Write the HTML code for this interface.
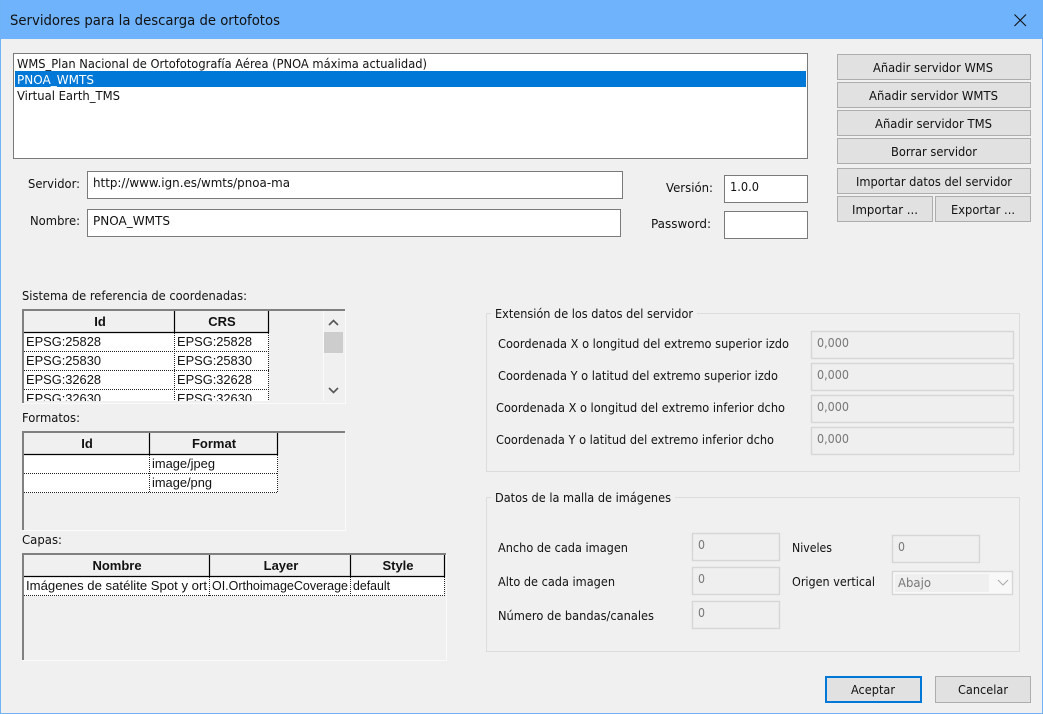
<!DOCTYPE html>
<html lang="es">
<head>
<meta charset="utf-8">
<title>Servidores para la descarga de ortofotos</title>
<style>
html,body{margin:0;padding:0;width:1043px;height:714px;overflow:hidden;background:#f0f0f0}
svg{position:absolute;left:0;top:0;display:block}
text{font-family:"DejaVu Sans",sans-serif;font-size:12px;fill:#111;white-space:pre}
.a text{font-family:"Liberation Sans",Arial,sans-serif;font-size:13px;fill:#111}
.h text{font-family:"Liberation Sans",Arial,sans-serif;font-size:13px;font-weight:bold;fill:#111;text-anchor:middle}
.d text{fill:#777}
.i{fill:#fff;stroke:#7a7a7a;stroke-width:1}
.b{fill:#e1e1e1;stroke:#adadad;stroke-width:1}
.x{fill:#efefef;stroke:#d6d6d6;stroke-width:1.4}
.g{fill:none;stroke:#dcdcdc;stroke-width:1}
.l{stroke:#000;stroke-width:1.2;fill:none}
.o{stroke:#222;stroke-width:1;stroke-dasharray:1 1;fill:none}
</style>
</head>
<body>
<svg width="1043" height="714" viewBox="0 0 1043 714" xmlns="http://www.w3.org/2000/svg">
<defs>
<clipPath id="c1"><rect x="24" y="311" width="299" height="90"/></clipPath>
</defs>
<rect width="1043" height="714" fill="#f0f0f0"/>
<!-- Window frame -->
<rect x="0" y="0" width="1043" height="39" fill="#6fb3fc"/>
<rect x="0" y="0" width="1" height="714" fill="#6fb3f5"/>
<rect x="1042" y="0" width="1" height="714" fill="#6fb3f5"/>
<rect x="0" y="713" width="1043" height="1" fill="#6fb3f5"/>
<text x="10" y="25" style="font-size:14.5px" textLength="270" lengthAdjust="spacingAndGlyphs">Servidores para la descarga de ortofotos</text>
<path d="M1014.5 14.5L1026 26M1026 14.5L1014.5 26" stroke="#111" stroke-width="1.1" fill="none"/>

<!-- Server list -->
<rect class="i" x="13.5" y="53.5" width="794" height="105"/>
<rect x="15" y="71" width="791" height="16" fill="#0078d7"/>
<text x="17" y="68" textLength="410" lengthAdjust="spacingAndGlyphs">WMS_Plan Nacional de Ortofotografía Aérea (PNOA máxima actualidad)</text>
<text x="17" y="84" textLength="77" lengthAdjust="spacingAndGlyphs" style="fill:#fff">PNOA_WMTS</text>
<text x="17" y="100" textLength="103" lengthAdjust="spacingAndGlyphs">Virtual Earth_TMS</text>

<!-- Right buttons -->
<rect class="b" x="837.5" y="54.5" width="193" height="25"/>
<rect class="b" x="837.5" y="82.5" width="193" height="25"/>
<rect class="b" x="837.5" y="110.5" width="193" height="25"/>
<rect class="b" x="837.5" y="138.5" width="193" height="25"/>
<rect class="b" x="837.5" y="168.5" width="193" height="25"/>
<rect class="b" x="837.5" y="196.5" width="95" height="25"/>
<rect class="b" x="935.5" y="196.5" width="95" height="25"/>
<text x="873" y="72" textLength="120" lengthAdjust="spacingAndGlyphs">Añadir servidor WMS</text>
<text x="869" y="100" textLength="129" lengthAdjust="spacingAndGlyphs">Añadir servidor WMTS</text>
<text x="875" y="128" textLength="117" lengthAdjust="spacingAndGlyphs">Añadir servidor TMS</text>
<text x="891" y="156" textLength="86" lengthAdjust="spacingAndGlyphs">Borrar servidor</text>
<text x="856" y="186" textLength="156" lengthAdjust="spacingAndGlyphs">Importar datos del servidor</text>
<text x="852" y="214" textLength="66" lengthAdjust="spacingAndGlyphs">Importar ...</text>
<text x="951" y="214" textLength="64" lengthAdjust="spacingAndGlyphs">Exportar ...</text>

<!-- Server fields -->
<text x="28" y="188" textLength="52" lengthAdjust="spacingAndGlyphs">Servidor:</text>
<rect class="i" x="87.5" y="171.5" width="535" height="27"/>
<text x="93" y="187" textLength="197" lengthAdjust="spacingAndGlyphs">http://www.ign.es/wmts/pnoa-ma</text>
<text x="30" y="225" textLength="50" lengthAdjust="spacingAndGlyphs">Nombre:</text>
<rect class="i" x="87.5" y="209.5" width="533" height="27"/>
<text x="93" y="225" textLength="77" lengthAdjust="spacingAndGlyphs">PNOA_WMTS</text>
<text x="666" y="192" textLength="47" lengthAdjust="spacingAndGlyphs">Versión:</text>
<rect class="i" x="724.5" y="175.5" width="83" height="27"/>
<text x="730" y="191" textLength="29" lengthAdjust="spacingAndGlyphs">1.0.0</text>
<text x="651" y="228" textLength="60" lengthAdjust="spacingAndGlyphs">Password:</text>
<rect class="i" x="724.5" y="211.5" width="83" height="27"/>

<!-- CRS table -->
<text x="22" y="300" textLength="225" lengthAdjust="spacingAndGlyphs">Sistema de referencia de coordenadas:</text>
<path d="M23 403V310H345" stroke="#808080" stroke-width="2" fill="none"/>
<path d="M345.5 310V403.5H22" stroke="#fafafa" stroke-width="1" fill="none"/>
<g clip-path="url(#c1)">
<rect x="24" y="333" width="245" height="70" fill="#fff"/>
<g class="o">
<path d="M24 351.5H269M24 370.5H269M24 389.5H269M174.5 333V403M268.5 333V403"/>
</g>
<g class="a">
<text x="26" y="346" textLength="75" lengthAdjust="spacingAndGlyphs">EPSG:25828</text>
<text x="177" y="346" textLength="75" lengthAdjust="spacingAndGlyphs">EPSG:25828</text>
<text x="26" y="365" textLength="75" lengthAdjust="spacingAndGlyphs">EPSG:25830</text>
<text x="177" y="365" textLength="75" lengthAdjust="spacingAndGlyphs">EPSG:25830</text>
<text x="26" y="384" textLength="75" lengthAdjust="spacingAndGlyphs">EPSG:32628</text>
<text x="177" y="384" textLength="75" lengthAdjust="spacingAndGlyphs">EPSG:32628</text>
<text x="26" y="403" textLength="75" lengthAdjust="spacingAndGlyphs">EPSG:32630</text>
<text x="177" y="403" textLength="75" lengthAdjust="spacingAndGlyphs">EPSG:32630</text>
</g>
</g>
<path class="l" d="M24 332.5H269M174.5 311V333M268.5 311V333"/>
<g class="h">
<text x="100" y="326">Id</text>
<text x="222" y="326">CRS</text>
</g>
<rect x="323" y="311" width="1" height="90" fill="#fbfbfb"/>
<rect x="324" y="332" width="19" height="21" fill="#cdcdcd"/>
<path d="M329 325L333.5 320.500L338 325" stroke="#555" stroke-width="1.6" fill="none"/>
<path d="M329 388L333.5 392.500L338 388" stroke="#555" stroke-width="1.6" fill="none"/>

<!-- Formats table -->
<text x="22" y="422" textLength="58" lengthAdjust="spacingAndGlyphs">Formatos:</text>
<path d="M23 530V432H345" stroke="#808080" stroke-width="2" fill="none"/>
<path d="M345.5 432V530.500H22" stroke="#fafafa" stroke-width="1" fill="none"/>
<rect x="24" y="455" width="254" height="38" fill="#fff"/>
<g class="o">
<path d="M24 473.5H278M24 492.5H278M149.500 455V493M277.500 455V493"/>
</g>
<path class="l" d="M24 454.500H278M149.500 433V455M277.500 433V455"/>
<g class="h">
<text x="87" y="448">Id</text>
<text x="214" y="448">Format</text>
</g>
<g class="a">
<text x="152" y="468" textLength="63" lengthAdjust="spacingAndGlyphs">image/jpeg</text>
<text x="152" y="487" textLength="60" lengthAdjust="spacingAndGlyphs">image/png</text>
</g>

<!-- Layers table -->
<text x="22" y="544" textLength="40" lengthAdjust="spacingAndGlyphs">Capas:</text>
<path d="M23 660V554H446" stroke="#808080" stroke-width="2" fill="none"/>
<path d="M446.500 554V660.500H22" stroke="#fafafa" stroke-width="1" fill="none"/>
<rect x="24" y="577" width="421" height="19" fill="#fff"/>
<g class="o">
<path d="M24 595.500H445M209.500 577V596M350.500 577V596M444.500 577V596"/>
</g>
<path class="l" d="M24 576.500H445M209.500 555V577M350.500 555V577M444.500 555V577"/>
<g class="h">
<text x="117" y="570">Nombre</text>
<text x="281" y="570">Layer</text>
<text x="398" y="570">Style</text>
</g>
<g class="a">
<text x="26" y="590" textLength="181" lengthAdjust="spacingAndGlyphs">Imágenes de satélite Spot y ort</text>
<text x="212" y="590" textLength="136" lengthAdjust="spacingAndGlyphs">OI.OrthoimageCoverage</text>
<text x="353" y="590" textLength="37" lengthAdjust="spacingAndGlyphs">default</text>
</g>

<!-- Extent group -->
<rect class="g" x="486.500" y="313.500" width="533" height="158"/>
<rect x="491" y="310" width="206" height="8" fill="#f0f0f0"/>
<text x="495" y="318" textLength="198" lengthAdjust="spacingAndGlyphs">Extensión de los datos del servidor</text>
<text x="498" y="348" textLength="291" lengthAdjust="spacingAndGlyphs">Coordenada X o longitud del extremo superior izdo</text>
<text x="498" y="380" textLength="280" lengthAdjust="spacingAndGlyphs">Coordenada Y o latitud del extremo superior izdo</text>
<text x="496" y="412" textLength="289" lengthAdjust="spacingAndGlyphs">Coordenada X o longitud del extremo inferior dcho</text>
<text x="496" y="444" textLength="278" lengthAdjust="spacingAndGlyphs">Coordenada Y o latitud del extremo inferior dcho</text>
<rect class="x" x="811.500" y="331.500" width="202" height="27"/>
<rect class="x" x="811.500" y="363.500" width="202" height="27"/>
<rect class="x" x="811.500" y="395.500" width="202" height="27"/>
<rect class="x" x="811.500" y="427.500" width="202" height="27"/>
<g class="d">
<text x="817" y="347" textLength="32" lengthAdjust="spacingAndGlyphs">0,000</text>
<text x="817" y="379" textLength="32" lengthAdjust="spacingAndGlyphs">0,000</text>
<text x="817" y="411" textLength="32" lengthAdjust="spacingAndGlyphs">0,000</text>
<text x="817" y="443" textLength="32" lengthAdjust="spacingAndGlyphs">0,000</text>
</g>

<!-- Grid group -->
<rect class="g" x="486.500" y="497.500" width="533" height="154"/>
<rect x="491" y="494" width="184" height="8" fill="#f0f0f0"/>
<text x="495" y="502" textLength="176" lengthAdjust="spacingAndGlyphs">Datos de la malla de imágenes</text>
<text x="498" y="552" textLength="130" lengthAdjust="spacingAndGlyphs">Ancho de cada imagen</text>
<text x="498" y="586" textLength="117" lengthAdjust="spacingAndGlyphs">Alto de cada imagen</text>
<text x="498" y="620" textLength="156" lengthAdjust="spacingAndGlyphs">Número de bandas/canales</text>
<text x="792" y="552" textLength="40" lengthAdjust="spacingAndGlyphs">Niveles</text>
<text x="792" y="586" textLength="83" lengthAdjust="spacingAndGlyphs">Origen vertical</text>
<rect class="x" x="692.500" y="533.500" width="87" height="27"/>
<rect class="x" x="692.500" y="567.500" width="87" height="27"/>
<rect class="x" x="692.500" y="601.500" width="87" height="27"/>
<rect class="x" x="892.500" y="535.500" width="87" height="27"/>
<rect x="892.500" y="571.500" width="120" height="23" fill="#f8f8f8" stroke="#d6d6d6" stroke-width="1.4"/>
<rect x="895" y="574" width="94" height="18" fill="#efefef"/>
<path d="M998 580L1003 585L1008 580" stroke="#aaa" stroke-width="1" fill="none"/>
<g class="d">
<text x="698" y="549" textLength="7" lengthAdjust="spacingAndGlyphs">0</text>
<text x="698" y="583" textLength="7" lengthAdjust="spacingAndGlyphs">0</text>
<text x="698" y="617" textLength="7" lengthAdjust="spacingAndGlyphs">0</text>
<text x="898" y="551" textLength="7" lengthAdjust="spacingAndGlyphs">0</text>
<text x="898" y="587" textLength="33" lengthAdjust="spacingAndGlyphs">Abajo</text>
</g>

<!-- Dialog buttons -->
<rect x="826" y="677" width="95" height="25" fill="#e1e1e1" stroke="#0078d7" stroke-width="2"/>
<text x="851" y="694" textLength="44" lengthAdjust="spacingAndGlyphs">Aceptar</text>
<rect class="b" x="935.500" y="676.500" width="95" height="26"/>
<text x="958" y="694" textLength="50" lengthAdjust="spacingAndGlyphs">Cancelar</text>
</svg>
</body>
</html>
